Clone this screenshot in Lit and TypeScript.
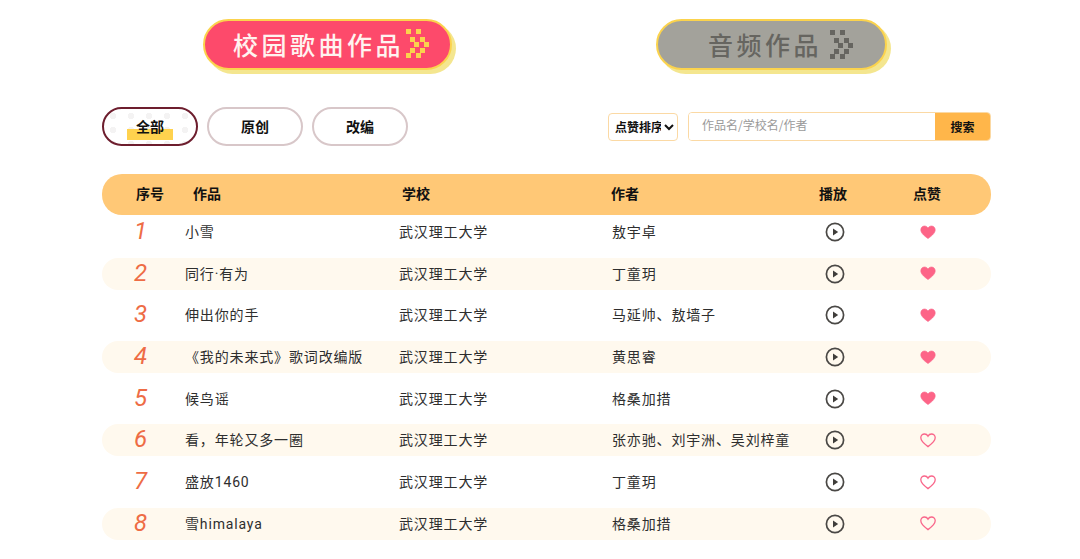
import { LitElement, html, css, svg } from 'lit'
import { customElement } from 'lit/decorators.js'

const rows = [
  { name: '小雪', author: '敖宇卓', liked: true },
  { name: '同行·有为', author: '丁童玥', liked: true },
  { name: '伸出你的手', author: '马延帅、敖墙子', liked: true },
  { name: '《我的未来式》歌词改编版', author: '黄思睿', liked: true },
  { name: '候鸟谣', author: '格桑加措', liked: true },
  { name: '看，年轮又多一圈', author: '张亦驰、刘宇洲、吴刘梓童', liked: false },
  { name: '盛放1460', author: '丁童玥', liked: false },
  { name: '雪himalaya', author: '格桑加措', liked: false }
]

// top-left corners of the pixel arrow's dots, as x/y pairs
const arrowDots = [
  [0, 0], [10, 0], [4, 8], [14, 8], [8, 13], [18, 13], [4, 19], [14, 19], [0, 24], [10, 24]
]

const arrow = (fill: string) => html`
  <svg class="arrow" width="24" height="29" viewBox="0 0 24 29">
    ${arrowDots.map(([x, y]) => svg`<rect x=${x} y=${y} width="5" height="5" fill=${fill}></rect>`)}
  </svg>
`

const playIcon = html`
  <svg width="20" height="20" viewBox="0 0 20 20">
    <circle cx="10" cy="10" r="8.6" fill="none" stroke="#4a4845" stroke-width="1.7"></circle>
    <path d="M8 6.6 L13.2 10 L8 13.4 Z" fill="#3f3d3a"></path>
  </svg>
`

const heartPath = 'M8 13.6 C3 10 .8 7.6 .8 4.8 C.8 2.6 2.5 1 4.5 1 C6 1 7.3 1.8 8 3.1 C8.7 1.8 10 1 11.5 1 C13.5 1 15.2 2.6 15.2 4.8 C15.2 7.6 13 10 8 13.6 Z'

const heart = (filled: boolean) => html`
  <svg width="16" height="15" viewBox="0 0 16 15">
    <path
      d=${heartPath}
      fill=${filled ? '#fd6487' : 'none'}
      stroke="#f9668a"
      stroke-width=${filled ? 0.6 : 1.3}
    ></path>
  </svg>
`

@customElement('app-root')
export class AppRoot extends LitElement {
  static styles = css`
    :host {
      display: block;
      width: 1080px;
      height: 559px;
      overflow: hidden;
      background: #fff;
      font-family: "Noto Sans CJK SC", "Noto Sans", sans-serif;
      color: #222;
    }

    .tabs {
      display: flex;
      gap: 204px;
      padding: 19px 0 0 203px;
    }
    .tab {
      box-sizing: border-box;
      height: 51px;
      border: 2px solid #fbd34d;
      border-radius: 26px;
      box-shadow: 4px 4px 0 #f4e68f;
      display: flex;
      align-items: center;
      font-size: 25px;
      font-weight: 500;
      letter-spacing: 3.5px;
      line-height: 1;
    }
    .tab.song {
      width: 249px;
      padding-left: 28px;
      background: #fd4a6b;
      color: #fff3f0;
    }
    .tab.song .arrow {
      margin: 0 0 3px 2px;
    }
    .tab.audio {
      width: 231px;
      padding-left: 50px;
      background: #a3a29b;
      color: #666560;
    }
    .tab.audio .arrow {
      margin-left: 8px;
    }
    .arrow {
      flex: none;
    }

    .filters {
      display: flex;
      align-items: center;
      height: 39px;
      margin: 37px 90px 0 102px;
    }
    .chip {
      box-sizing: border-box;
      width: 96px;
      height: 39px;
      margin-right: 9px;
      padding-bottom: 2px;
      border: 2px solid #d8c7c9;
      border-radius: 20px;
      display: flex;
      align-items: center;
      justify-content: center;
      font-size: 14px;
      font-weight: 700;
      color: #111;
      background: #fff;
    }
    .chip.active {
      border-color: #6d1e2e;
      background:
        linear-gradient(#ffd24e, #ffd24e) center 20px / 46px 11px no-repeat,
        radial-gradient(circle, #f4f3f3 3px, transparent 3.5px) 0 0 / 18px 14px,
        #fff;
    }
    .sort {
      box-sizing: border-box;
      width: 70px;
      height: 28px;
      margin-left: auto;
      padding: 0 0 0 2px;
      border: 1px solid #fbd9a4;
      border-radius: 4px;
      background: #fff;
      font: 700 12px "Noto Sans CJK SC", sans-serif;
      color: #111;
    }
    .search {
      box-sizing: border-box;
      width: 303px;
      height: 29px;
      margin: 0 -1px 0 10px;
      display: flex;
      border: 1px solid #fbd9a4;
      border-radius: 4px;
      overflow: hidden;
    }
    .search input {
      flex: 1;
      min-width: 0;
      border: 0;
      outline: 0;
      padding: 0 0 4px 13px;
      font: 12px "Noto Sans CJK SC", sans-serif;
      background: #fff;
    }
    .search input::placeholder {
      color: #9a9a9a;
    }
    .search button {
      width: 55px;
      border: 0;
      padding: 0;
      background: #ffb64a;
      font: 700 12px "Noto Sans CJK SC", sans-serif;
      color: #111;
    }

    .table {
      margin: 28px 89px 0 102px;
    }
    .head {
      box-sizing: border-box;
      height: 41px;
      border-radius: 20px;
      background: #ffc876;
      display: grid;
      grid-template-columns: 57px 209px 209px 208px 94px auto;
      align-items: center;
      padding: 0 0 3px 34px;
      font-size: 14px;
      font-weight: 700;
      color: #111;
    }
    .rows {
      display: grid;
      gap: 9.7px;
      margin-top: 1px;
    }
    .row {
      height: 32px;
      border-radius: 16px;
      display: grid;
      grid-template-columns: 83px 214px 213px 183px 80px 105px;
      align-items: center;
      font: 14px Roboto, "Noto Sans CJK SC", sans-serif;
      letter-spacing: 0.85px;
      color: #2e2e2e;
    }
    .row:nth-child(even) {
      background: #fff9ee;
    }
    .num {
      text-align: center;
      padding: 0 6px 2px 0;
      font: italic 400 24px Roboto, sans-serif;
      color: #ee6c45;
      letter-spacing: 0;
    }
    .text {
      padding-bottom: 2px;
      white-space: nowrap;
    }
    .icon {
      display: flex;
      justify-content: center;
    }
  `

  render () {
    return html`
      <div class="tabs">
        <div class="tab song">校园歌曲作品${arrow('#fbd34d')}</div>
        <div class="tab audio">音频作品${arrow('#666560')}</div>
      </div>
      <div class="filters">
        <div class="chip active">全部</div>
        <div class="chip">原创</div>
        <div class="chip">改编</div>
        <select class="sort"><option>点赞排序</option></select>
        <div class="search">
          <input placeholder="作品名/学校名/作者" />
          <button>搜索</button>
        </div>
      </div>
      <div class="table">
        <div class="head">
          <span>序号</span><span>作品</span><span>学校</span><span>作者</span><span>播放</span><span>点赞</span>
        </div>
        <div class="rows">
          ${rows.map((row, i) => html`
            <div class="row">
              <span class="num">${i + 1}</span>
              <span class="text">${row.name}</span>
              <span class="text">武汉理工大学</span>
              <span class="text">${row.author}</span>
              <span class="icon">${playIcon}</span>
              <span class="icon">${heart(row.liked)}</span>
            </div>
          `)}
        </div>
      </div>
    `
  }
}
